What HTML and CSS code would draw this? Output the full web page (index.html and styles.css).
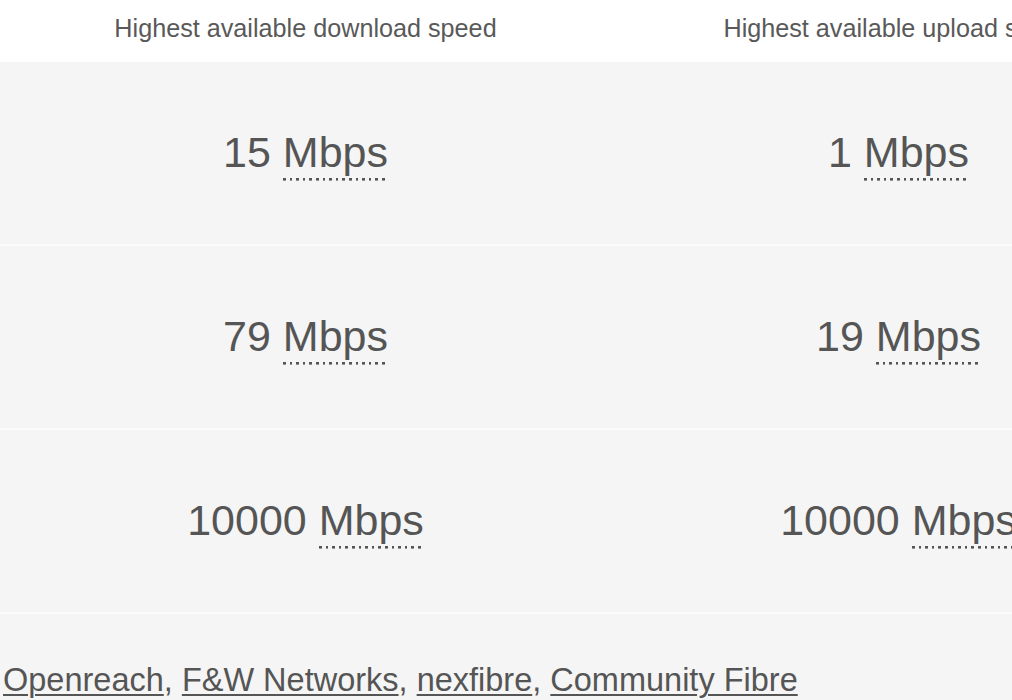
FILE: index.html
```html
<!DOCTYPE html>
<html lang="en">
<head>
<meta charset="utf-8">
<title>Broadband speeds</title>
<link rel="stylesheet" href="styles.css">
</head>
<body>
<div class="speeds">
  <div class="row head">
    <div class="cell">Highest available download speed</div>
    <div class="cell">Highest available upload speed</div>
  </div>
  <div class="row val">
    <div class="cell">15 <abbr class="unit" title="Megabits per second">Mbps</abbr></div>
    <div class="cell">1 <abbr class="unit" title="Megabits per second">Mbps</abbr></div>
  </div>
  <div class="row val">
    <div class="cell">79 <abbr class="unit" title="Megabits per second">Mbps</abbr></div>
    <div class="cell">19 <abbr class="unit" title="Megabits per second">Mbps</abbr></div>
  </div>
  <div class="row val">
    <div class="cell">10000 <abbr class="unit" title="Megabits per second">Mbps</abbr></div>
    <div class="cell">10000 <abbr class="unit" title="Megabits per second">Mbps</abbr></div>
  </div>
  <div class="row foot">
    <div class="providers"><a href="#">Openreach</a>, <a href="#">F&amp;W Networks</a>, <a href="#">nexfibre</a>, <a href="#">Community Fibre</a></div>
  </div>
</div>
</body>
</html>
```

FILE: styles.css
```css
html, body {
  margin: 0;
  padding: 0;
  background: #ffffff;
  overflow: hidden;
}
body {
  width: 1012px;
  height: 700px;
  font-family: "Liberation Sans", Arial, sans-serif;
  color: #555555;
}
.speeds {
  width: 1012px;
  overflow: hidden;
}
.row {
  display: grid;
  grid-template-columns: 593px 593px;
  padding-left: 9px;
  box-sizing: border-box;
  width: 1400px;
}
.cell {
  text-align: center;
  white-space: nowrap;
}
.head {
  height: 62px;
  padding-top: 14px;
  font-size: 25.2px;
  color: #595959;
  background: #ffffff;
}
.val {
  height: 184px;
  align-items: center;
  padding-bottom: 2px;
  font-size: 43px;
  background: #f5f5f5;
  border-bottom: 2px solid #fbfbfb;
}
.unit {
  text-decoration: none;
  padding-bottom: 5px;
  background: repeating-linear-gradient(to right, #555555 0 2.6px, transparent 2.6px 6.6px) left bottom / 100% 2.6px no-repeat;
}
.foot {
  display: block;
  padding-left: 3px;
  padding-top: 48px;
  height: 86px;
  background: #f5f5f5;
  font-size: 32.5px;
  white-space: nowrap;
}
.providers a {
  color: #555555;
  text-decoration: underline;
  text-decoration-thickness: 2px;
  text-underline-offset: 3px;
}
```
